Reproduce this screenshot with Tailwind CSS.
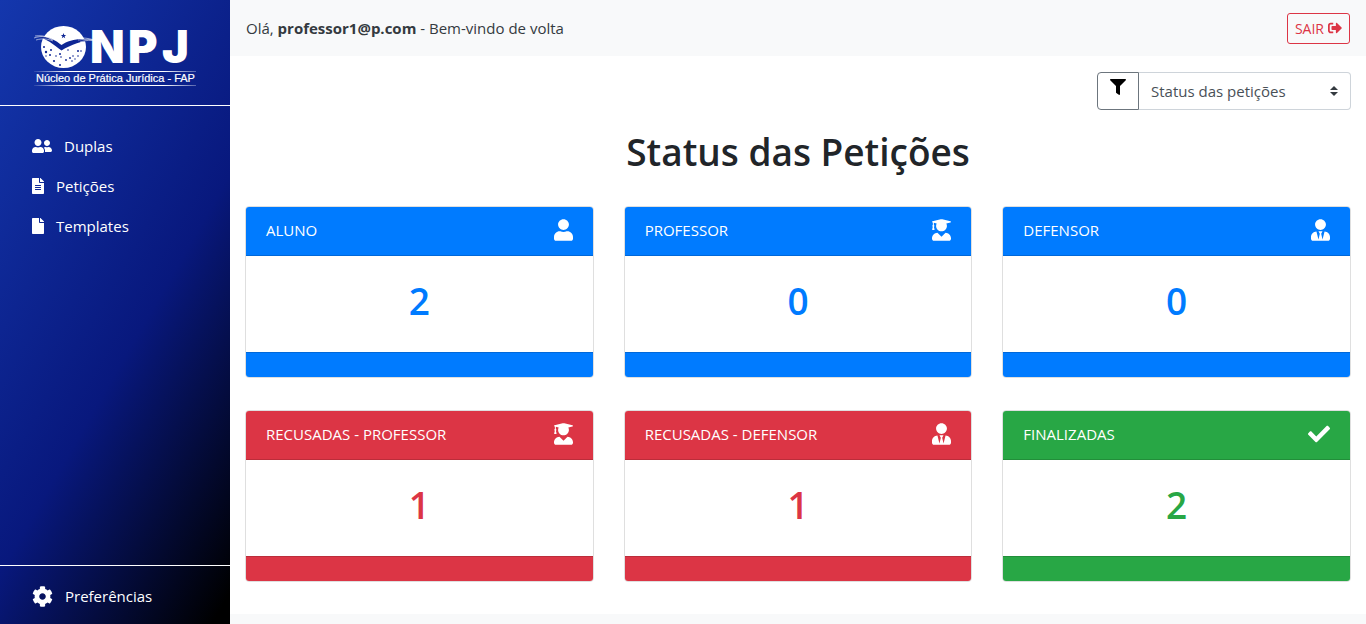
<!DOCTYPE html>
<html lang="pt-BR">
<head>
<meta charset="utf-8">
<meta name="viewport" content="width=device-width, initial-scale=1">
<title>NPJ - Núcleo de Prática Jurídica</title>
<script src="https://cdn.jsdelivr.net/npm/@tailwindcss/browser@4"></script>
</head>
<body class="flex min-h-screen bg-[#f8f9fa] font-['Open_Sans','Noto_Sans',sans-serif] text-[15px] leading-6 text-[#212529]">

<svg class="hidden" aria-hidden="true">
  <symbol id="user" viewBox="0 0 448 512"><path d="M224 256c70.7 0 128-57.3 128-128S294.7 0 224 0 96 57.3 96 128s57.3 128 128 128zm89.6 32h-16.7c-22.2 10.2-46.9 16-72.9 16s-50.6-5.8-72.9-16h-16.7C60.2 288 0 348.2 0 422.4V464c0 26.5 21.5 48 48 48h352c26.5 0 48-21.5 48-48v-41.6c0-74.2-60.2-134.4-134.4-134.4z"/></symbol>
  <symbol id="graduate" viewBox="0 0 448 512"><path d="M319.4 320.6L224 416l-95.4-95.4C57.1 323.7 0 382.2 0 454.4v9.6c0 26.5 21.5 48 48 48h352c26.5 0 48-21.5 48-48v-9.6c0-72.2-57.1-130.7-128.6-133.8zM13.6 79.8l6.4 1.5v58.4c-7 4.2-12 11.5-12 20.3 0 8.4 4.6 15.4 11.1 19.7L3.5 242c-1.7 6.9 2.1 14 7.6 14h41.8c5.5 0 9.3-7.1 7.6-14l-15.6-62.3C51.4 175.4 56 168.4 56 160c0-8.8-5-16.1-12-20.3V87.1l66 15.9c-8.6 17.2-14 36.4-14 57 0 70.7 57.3 128 128 128s128-57.3 128-128c0-20.6-5.3-39.8-14-57l96.3-23.2c18.2-4.4 18.2-27.1 0-31.5l-190.4-46c-13-3.1-26.7-3.1-39.7 0L13.6 48.2c-18.1 4.4-18.1 27.2 0 31.6z"/></symbol>
  <symbol id="tie" viewBox="0 0 448 512"><path d="M224 256c70.7 0 128-57.3 128-128S294.7 0 224 0 96 57.3 96 128s57.3 128 128 128zm95.8 32.6L272 480l-32-136 32-56h-96l32 56-32 136-47.8-191.4C56.9 292 0 350.3 0 422.4V464c0 26.5 21.5 48 48 48h352c26.5 0 48-21.5 48-48v-41.6c0-72.1-56.9-130.4-128.2-133.8z"/></symbol>
</svg>

<aside class="sticky top-0 flex h-screen w-[230px] shrink-0 flex-col bg-[linear-gradient(120deg,#1437ad_0%,#08187d_56%,#000000_97%)] text-white">
  <div class="flex h-[106px] items-center justify-center border-b border-white pt-[7px]">
    <a href="#" aria-label="NPJ - Núcleo de Prática Jurídica - FAP">
      <svg class="block" width="164" height="80" viewBox="33 16 164 80">
        <defs>
          <linearGradient id="rule"><stop offset="0" stop-color="#fff" stop-opacity=".1"/><stop offset=".2" stop-color="#fff"/><stop offset=".8" stop-color="#fff"/><stop offset="1" stop-color="#fff" stop-opacity=".3"/></linearGradient>
        </defs>
        <ellipse cx="63.500" cy="47" rx="22.500" ry="21" fill="#fff"/>
        <path d="M38 37C47 35 55 40 61.500 45C69 40 80 37 96 40.500C83 40 72 44 61.500 50.500C53 44 47 39 38 37z" fill="#0e2694"/>
        <path d="M34 38c8-3 15-1 19 2M35 36c9-1 13 1 17 4M36 40c7-2 12-1 17 1" fill="none" stroke="#fff" stroke-width=".7" opacity=".8"/>
        <path d="M78 40c7-1 13-1 20 1M80 42c6-2 11-2 17-1M82 38c5 0 10 1 15 3" fill="none" stroke="#fff" stroke-width=".7" opacity=".8"/>
        <path d="M63.500 33l.7 1.900 2 .1-1.600 1.300.6 2-1.700-1.200-1.700 1.200.6-2-1.600-1.300 2-.1z" fill="#0e2694"/>
        <g fill="#0e2694"><circle cx="44" cy="47" r="1"/><circle cx="51" cy="50" r="1"/><circle cx="46" cy="52" r="1.200"/><circle cx="50" cy="55" r="1"/><circle cx="46" cy="56" r=".7"/><circle cx="54" cy="61" r="1.100"/><circle cx="60" cy="54" r="1"/><circle cx="61" cy="57" r=".8"/><circle cx="56" cy="56" r=".8"/><circle cx="60" cy="65" r="1"/><circle cx="66" cy="60" r=".9"/><circle cx="68" cy="50" r=".8"/><circle cx="70" cy="58" r=".9"/><circle cx="73" cy="56" r=".8"/><circle cx="72" cy="61" r=".8"/><circle cx="78" cy="51" r="1"/><circle cx="81" cy="51" r=".8"/><circle cx="78" cy="56" r=".8"/><circle cx="75" cy="59" r=".7"/></g>
        <g fill="#fff" font-family="Inter, sans-serif" font-weight="900" font-size="45"><text x="90" y="63">N</text><text x="128" y="63">P</text><text x="162" y="63">J</text></g>
        <rect x="34" y="71" width="162" height="1" fill="url(#rule)"/>
        <text x="36" y="82" fill="#fff" stroke="#fff" stroke-width=".2" font-family="Liberation Sans, Arial, sans-serif" font-size="11">Núcleo de Prática Jurídica - FAP</text>
        <rect x="34" y="85" width="162" height="1" fill="url(#rule)"/>
      </svg>
    </a>
  </div>
  <nav class="flex grow flex-col gap-4 px-8 pt-7">
    <a href="#" class="flex items-center gap-3"><svg class="h-4 w-5 fill-current" viewBox="0 0 640 512"><path d="M192 256c61.900 0 112-50.100 112-112S253.900 32 192 32 80 82.100 80 144s50.100 112 112 112zm76.800 32h-8.300c-20.800 10-43.900 16-68.500 16s-47.600-6-68.500-16h-8.300C51.600 288 0 339.600 0 403.200V432c0 26.500 21.500 48 48 48h288c26.500 0 48-21.500 48-48v-28.800c0-63.600-51.600-115.200-115.200-115.200zM480 256c53 0 96-43 96-96s-43-96-96-96-96 43-96 96 43 96 96 96zm48 32h-3.800c-13.900 4.800-28.600 8-44.200 8s-30.300-3.200-44.200-8H432c-20.400 0-39.200 5.900-55.700 15.400 24.400 26.300 39.700 61.200 39.700 99.800v38.400c0 2.200-.5 4.300-.6 6.400H592c26.500 0 48-21.500 48-48 0-61.900-50.100-112-112-112z"/></svg>Duplas</a>
    <a href="#" class="flex items-center gap-3"><svg class="h-4 w-3 fill-current" viewBox="0 0 384 512"><path d="M224 136V0H24C10.700 0 0 10.700 0 24v464c0 13.300 10.700 24 24 24h336c13.300 0 24-10.700 24-24V160H248c-13.200 0-24-10.800-24-24zm64 236c0 6.600-5.400 12-12 12H108c-6.600 0-12-5.400-12-12v-8c0-6.600 5.400-12 12-12h168c6.600 0 12 5.400 12 12v8zm0-64c0 6.600-5.400 12-12 12H108c-6.600 0-12-5.400-12-12v-8c0-6.600 5.400-12 12-12h168c6.600 0 12 5.400 12 12v8zm0-72v8c0 6.600-5.400 12-12 12H108c-6.600 0-12-5.400-12-12v-8c0-6.600 5.400-12 12-12h168c6.600 0 12 5.400 12 12zm96-114.100v6.100H256V0h6.100c6.400 0 12.500 2.500 17 7l97.900 98c4.500 4.500 7 10.600 7 16.900z"/></svg>Petições</a>
    <a href="#" class="flex items-center gap-3"><svg class="h-4 w-3 fill-current" viewBox="0 0 384 512"><path d="M224 136V0H24C10.700 0 0 10.700 0 24v464c0 13.300 10.700 24 24 24h336c13.300 0 24-10.700 24-24V160H248c-13.200 0-24-10.800-24-24zm160-14.100v6.100H256V0h6.100c6.400 0 12.500 2.500 17 7l97.900 98c4.500 4.500 7 10.600 7 16.900z"/></svg>Templates</a>
  </nav>
  <div class="h-[59px] border-t border-white px-8 pt-[18px]">
    <a href="#" class="flex items-center gap-3"><svg class="size-[21px] fill-current" viewBox="0 0 512 512"><path d="M487.400 315.700l-42.600-24.600c4.300-23.200 4.300-47 0-70.200l42.600-24.600c4.900-2.800 7.100-8.600 5.500-14-11.100-35.600-30-67.800-54.700-94.600-3.800-4.100-10-5.100-14.800-2.300L380.800 110c-17.900-15.400-38.500-27.300-60.800-35.100V25.800c0-5.600-3.900-10.500-9.400-11.700-36.700-8.200-74.300-7.800-109.200 0-5.500 1.200-9.400 6.100-9.400 11.700V75c-22.200 7.900-42.800 19.800-60.800 35.100L88.700 85.500c-4.900-2.800-11-1.900-14.800 2.300-24.700 26.700-43.600 58.900-54.700 94.600-1.700 5.400.6 11.200 5.500 14L67.300 221c-4.300 23.200-4.300 47 0 70.200l-42.600 24.600c-4.900 2.800-7.100 8.600-5.500 14 11.100 35.600 30 67.800 54.700 94.600 3.800 4.100 10 5.100 14.800 2.300l42.600-24.600c17.900 15.400 38.500 27.300 60.800 35.100v49.200c0 5.600 3.900 10.500 9.400 11.700 36.700 8.200 74.300 7.800 109.200 0 5.500-1.200 9.400-6.100 9.400-11.700v-49.200c22.200-7.900 42.800-19.800 60.800-35.100l42.600 24.600c4.900 2.800 11 1.900 14.800-2.300 24.700-26.700 43.600-58.900 54.700-94.600 1.500-5.500-.7-11.300-5.600-14.100zM256 336c-44.100 0-80-35.900-80-80s35.900-80 80-80 80 35.900 80 80-35.900 80-80 80z"/></svg>Preferências</a>
  </div>
</aside>

<div class="min-w-0 grow">
  <header class="flex h-14 items-center justify-between px-4 text-[#343a40]">
    <p>Olá, <strong class="font-bold">professor1@p.com</strong> - Bem-vindo de volta</p>
    <button type="button" class="flex items-center gap-1 rounded-[3px] border border-[#dc3545] px-[7px] py-1 text-sm leading-[21px] text-[#dc3545]">SAIR <svg class="size-[14px] fill-current" viewBox="0 0 512 512"><path d="M497 273L329 441c-15 15-41 4.500-41-17v-96H152c-13.300 0-24-10.700-24-24v-96c0-13.300 10.700-24 24-24h136V88c0-21.400 25.900-32 41-17l168 168c9.300 9.400 9.300 24.600 0 34zM192 436v-40c0-6.600-5.400-12-12-12H96c-17.700 0-32-14.300-32-32V160c0-17.700 14.300-32 32-32h84c6.600 0 12-5.400 12-12V76c0-6.600-5.400-12-12-12H96c-53 0-96 43-96 96v192c0 53 43 96 96 96h84c6.600 0 12-5.400 12-12z"/></svg></button>
  </header>

  <main class="bg-white px-[15px] pt-4 pb-8">
    <form class="flex justify-end">
      <button type="button" aria-label="Filtrar" class="flex h-[38px] w-[42px] justify-center rounded-l border border-[#6c757d] pt-1.5 text-black"><svg class="size-4 fill-current" viewBox="0 0 512 512"><path d="M487.976 0H24.028C2.710 0-8.047 25.866 7.058 40.971L192 225.941V432c0 7.831 3.821 15.170 10.237 19.662l80 55.980C298.020 518.690 320 507.493 320 487.980V225.941l184.947-184.970C520.021 25.896 509.338 0 487.976 0z"/></svg></button>
      <div class="relative">
        <select aria-label="Status das petições" class="h-[38px] w-[212px] appearance-none rounded-r border border-l-0 border-[#ced4da] bg-white pr-7 pl-3 text-[#495057]">
          <option>Status das petições</option>
        </select>
        <svg class="pointer-events-none absolute top-[14px] right-[13px] h-[10px] w-2 fill-[#343a40]" viewBox="0 0 4 5"><path d="M2 0L0 2h4zm0 5L0 3h4z"/></svg>
      </div>
    </form>

    <h1 class="mt-[18px] mb-[30px] text-center text-[37px] leading-12 font-semibold">Status das Petições</h1>

    <div class="grid grid-cols-3 gap-x-[30px] gap-y-8">
      <section class="overflow-hidden rounded border border-[#dfdfdf] text-[#007bff]">
        <div class="flex h-[49px] items-center justify-between border-b border-black/15 bg-[#007bff] px-5 pb-0.5 text-white"><h2>ALUNO</h2><svg class="h-[22px] w-[19px] fill-current"><use href="#user"/></svg></div>
        <p class="flex h-24 items-center justify-center pb-1.5 text-[37px] font-semibold">2</p>
        <div class="h-[25px] border-t border-black/15 bg-[#007bff]"></div>
      </section>
      <section class="overflow-hidden rounded border border-[#dfdfdf] text-[#007bff]">
        <div class="flex h-[49px] items-center justify-between border-b border-black/15 bg-[#007bff] px-5 pb-0.5 text-white"><h2>PROFESSOR</h2><svg class="h-[22px] w-[19px] fill-current"><use href="#graduate"/></svg></div>
        <p class="flex h-24 items-center justify-center pb-1.5 text-[37px] font-semibold">0</p>
        <div class="h-[25px] border-t border-black/15 bg-[#007bff]"></div>
      </section>
      <section class="overflow-hidden rounded border border-[#dfdfdf] text-[#007bff]">
        <div class="flex h-[49px] items-center justify-between border-b border-black/15 bg-[#007bff] px-5 pb-0.5 text-white"><h2>DEFENSOR</h2><svg class="h-[22px] w-[19px] fill-current"><use href="#tie"/></svg></div>
        <p class="flex h-24 items-center justify-center pb-1.5 text-[37px] font-semibold">0</p>
        <div class="h-[25px] border-t border-black/15 bg-[#007bff]"></div>
      </section>
      <section class="overflow-hidden rounded border border-[#dfdfdf] text-[#dc3545]">
        <div class="flex h-[49px] items-center justify-between border-b border-black/15 bg-[#dc3545] px-5 pb-0.5 text-white"><h2>RECUSADAS - PROFESSOR</h2><svg class="h-[22px] w-[19px] fill-current"><use href="#graduate"/></svg></div>
        <p class="flex h-24 items-center justify-center pb-1.5 text-[37px] font-semibold">1</p>
        <div class="h-[25px] border-t border-black/15 bg-[#dc3545]"></div>
      </section>
      <section class="overflow-hidden rounded border border-[#dfdfdf] text-[#dc3545]">
        <div class="flex h-[49px] items-center justify-between border-b border-black/15 bg-[#dc3545] px-5 pb-0.5 text-white"><h2>RECUSADAS - DEFENSOR</h2><svg class="h-[22px] w-[19px] fill-current"><use href="#tie"/></svg></div>
        <p class="flex h-24 items-center justify-center pb-1.5 text-[37px] font-semibold">1</p>
        <div class="h-[25px] border-t border-black/15 bg-[#dc3545]"></div>
      </section>
      <section class="overflow-hidden rounded border border-[#dfdfdf] text-[#28a745]">
        <div class="flex h-[49px] items-center justify-between border-b border-black/15 bg-[#28a745] px-5 pb-0.5 text-white"><h2>FINALIZADAS</h2><svg class="size-[22px] fill-current" viewBox="0 0 512 512"><path d="M173.898 439.404l-166.400-166.400c-9.997-9.997-9.997-26.206 0-36.204l36.203-36.204c9.997-9.998 26.207-9.998 36.204 0L192 312.690 432.095 72.596c9.997-9.997 26.207-9.997 36.204 0l36.203 36.204c9.997 9.997 9.997 26.206 0 36.204l-294.400 294.401c-9.998 9.997-26.207 9.997-36.204-.001z"/></svg></div>
        <p class="flex h-24 items-center justify-center pb-1.5 text-[37px] font-semibold">2</p>
        <div class="h-[25px] border-t border-black/15 bg-[#28a745]"></div>
      </section>
    </div>
  </main>
</div>
</body>
</html>
